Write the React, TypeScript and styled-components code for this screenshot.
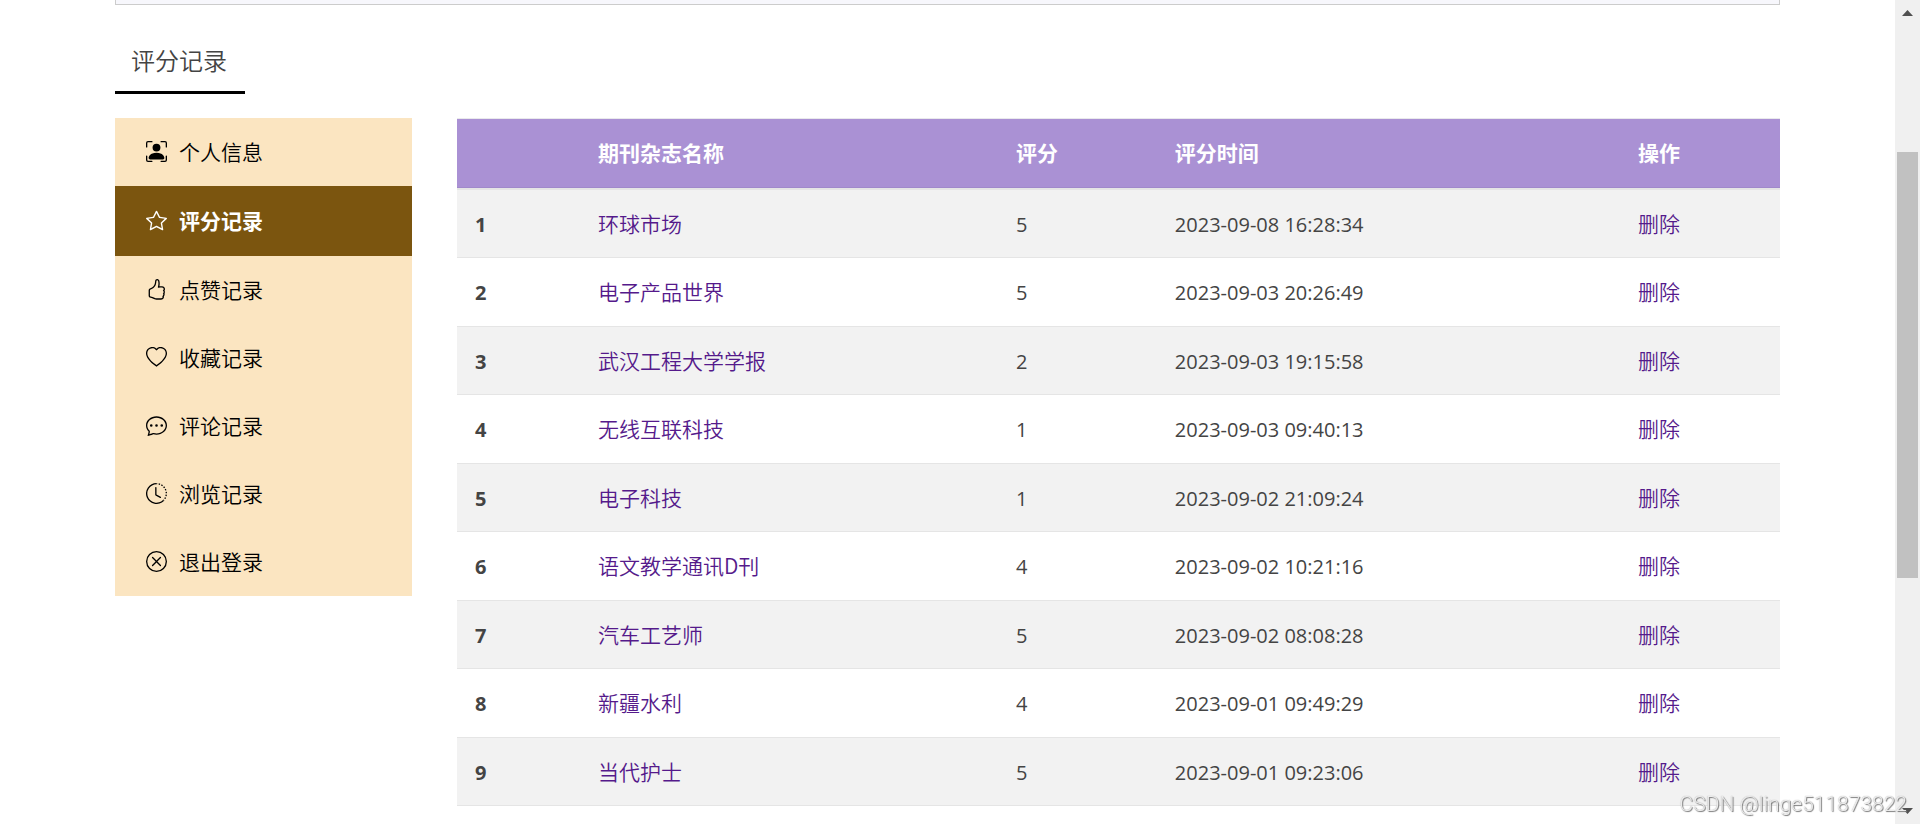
import React from "react";
import styled, { createGlobalStyle, css } from "styled-components";
import type { IconType } from "react-icons";
import {
  BsPersonBoundingBox,
  BsStar,
  BsHandThumbsUp,
  BsHeart,
  BsChatDots,
  BsClockHistory,
  BsXCircle,
} from "react-icons/bs";

const GlobalStyle = createGlobalStyle`
  * { box-sizing: border-box; }
  body {
    margin: 0;
    background: #fff;
    color: #444;
    font-family: "Noto Sans CJK SC", "Open Sans", sans-serif;
    font-size: 21px;
    font-weight: 350;
    line-height: 32px;
  }
`;

const Page = styled.div`
  display: flex;
  min-height: 100vh;
`;

const Content = styled.main`
  flex: 1;
  min-width: 0;
  padding: 0 115px 18px;
`;

const PanelEdge = styled.div`
  height: 5px;
  border: 1px solid #ccc;
  border-top: 0;
  background: #f7f7fc;
`;

const Title = styled.h1`
  display: inline-block;
  margin: 37px 0 24px;
  padding: 0 18px 13px 16px;
  border-bottom: 3px solid #000;
  font-size: 24px;
  font-weight: 350;
  line-height: 36px;
  vertical-align: top;
`;

const Columns = styled.div`
  display: flex;
  align-items: flex-start;
  gap: 45px;
`;

const Sidebar = styled.nav`
  flex: 0 0 297px;
  background: #fbe5c1;
`;

const MenuLink = styled.a<{ $active?: boolean }>`
  display: flex;
  align-items: center;
  gap: 12px;
  height: 68px;
  padding: 0 31px 2px;
  color: #000;
  text-decoration: none;

  svg {
    width: 21px;
    height: 21px;
  }

  ${(p) =>
    p.$active &&
    css`
      height: 70px;
      background: #7b550f;
      color: #fff;
      font-weight: 700;
    `}
`;

const Records = styled.table`
  flex: 1;
  min-width: 0;
  table-layout: fixed;
  border-collapse: separate;
  border-spacing: 0;
  border-top: 1px solid #e9e9ec;
`;

const Col = styled.col<{ $share: number }>`
  width: ${(p) => p.$share}%;
`;

const HeadCell = styled.th`
  height: 71px;
  padding: 0 18px 3px;
  border-bottom: 2px solid #e5e5e5;
  background: #aa91d4;
  box-shadow: inset 0 -1px #a089cb;
  color: #fff;
  font-weight: 700;
  text-align: left;
`;

const Row = styled.tr`
  height: 68px;

  &:nth-child(odd) {
    background: #f2f2f2;
  }
  &:nth-child(even) {
    height: 69px;
  }
`;

const cell = css`
  padding: 0 18px 2px;
  border-bottom: 1px solid #e5e5e5;
  text-align: left;
`;

const numeric = css`
  padding: 2px 18px 0;
  font-family: "Open Sans", sans-serif;
  font-size: 20px;
`;

const Index = styled.th`
  ${cell}
  ${numeric}
  font-weight: 700;
`;

const Cell = styled.td`
  ${cell}
`;

const NumberCell = styled.td`
  ${cell}
  ${numeric}
  font-weight: 400;
`;

const TextLink = styled.a`
  color: #551a8b;
  text-decoration: none;
`;

const ScrollTrack = styled.div`
  position: sticky;
  top: 0;
  display: flex;
  flex-direction: column;
  align-items: center;
  justify-content: space-between;
  flex: 0 0 25px;
  height: 100vh;
  padding: 10px 2px;
  background: #f0f0f0;
`;

const ScrollArrow = styled.svg`
  width: 11px;
  height: 6px;
  fill: #505050;
`;

const ThumbArea = styled.div`
  flex: 1;
  align-self: stretch;
  padding-top: 136px;
`;

const Thumb = styled.div`
  height: 65%;
  background: #c1c1c1;
`;

const Watermark = styled.div`
  position: fixed;
  right: 13px;
  bottom: 8px;
  color: rgba(255, 255, 255, 0.8);
  font-family: Roboto, sans-serif;
  font-size: 21px;
  font-weight: 300;
  line-height: 24px;
  text-shadow: 1px 1px 1px #777, 0 0 1px #999;
`;

const menu: { label: string; icon: IconType; active?: boolean }[] = [
  { label: "个人信息", icon: BsPersonBoundingBox },
  { label: "评分记录", icon: BsStar, active: true },
  { label: "点赞记录", icon: BsHandThumbsUp },
  { label: "收藏记录", icon: BsHeart },
  { label: "评论记录", icon: BsChatDots },
  { label: "浏览记录", icon: BsClockHistory },
  { label: "退出登录", icon: BsXCircle },
];

const records = [
  { name: "环球市场", score: 5, time: "2023-09-08 16:28:34" },
  { name: "电子产品世界", score: 5, time: "2023-09-03 20:26:49" },
  { name: "武汉工程大学学报", score: 2, time: "2023-09-03 19:15:58" },
  { name: "无线互联科技", score: 1, time: "2023-09-03 09:40:13" },
  { name: "电子科技", score: 1, time: "2023-09-02 21:09:24" },
  { name: "语文教学通讯D刊", score: 4, time: "2023-09-02 10:21:16" },
  { name: "汽车工艺师", score: 5, time: "2023-09-02 08:08:28" },
  { name: "新疆水利", score: 4, time: "2023-09-01 09:49:29" },
  { name: "当代护士", score: 5, time: "2023-09-01 09:23:06" },
];

const columns = [
  { label: "", share: 9.3 },
  { label: "期刊杂志名称", share: 31.6 },
  { label: "评分", share: 12 },
  { label: "评分时间", share: 35 },
  { label: "操作", share: 12.1 },
];

export default function App() {
  return (
    <>
      <GlobalStyle />
      <Page>
        <Content>
          <PanelEdge />
          <Title>评分记录</Title>
          <Columns>
            <Sidebar>
              {menu.map(({ label, icon: Icon, active }) => (
                <MenuLink key={label} href="#" $active={active} aria-current={active ? "page" : undefined}>
                  <Icon aria-hidden />
                  {label}
                </MenuLink>
              ))}
            </Sidebar>
            <Records>
              <colgroup>
                {columns.map((c) => (
                  <Col key={c.label} $share={c.share} />
                ))}
              </colgroup>
              <thead>
                <tr>
                  {columns.map((c) => (
                    <HeadCell key={c.label} scope="col">
                      {c.label}
                    </HeadCell>
                  ))}
                </tr>
              </thead>
              <tbody>
                {records.map((r, i) => (
                  <Row key={r.name}>
                    <Index scope="row">{i + 1}</Index>
                    <Cell>
                      <TextLink href="#">{r.name}</TextLink>
                    </Cell>
                    <NumberCell>{r.score}</NumberCell>
                    <NumberCell>{r.time}</NumberCell>
                    <Cell>
                      <TextLink href="#">删除</TextLink>
                    </Cell>
                  </Row>
                ))}
              </tbody>
            </Records>
          </Columns>
        </Content>
        <ScrollTrack aria-hidden>
          <ScrollArrow viewBox="0 0 11 6">
            <path d="M0 6 5.500 0 11 6z" />
          </ScrollArrow>
          <ThumbArea>
            <Thumb />
          </ThumbArea>
          <ScrollArrow viewBox="0 0 11 6">
            <path d="M0 0h11L5.500 6z" />
          </ScrollArrow>
        </ScrollTrack>
      </Page>
      <Watermark>CSDN @linge511873822</Watermark>
    </>
  );
}
